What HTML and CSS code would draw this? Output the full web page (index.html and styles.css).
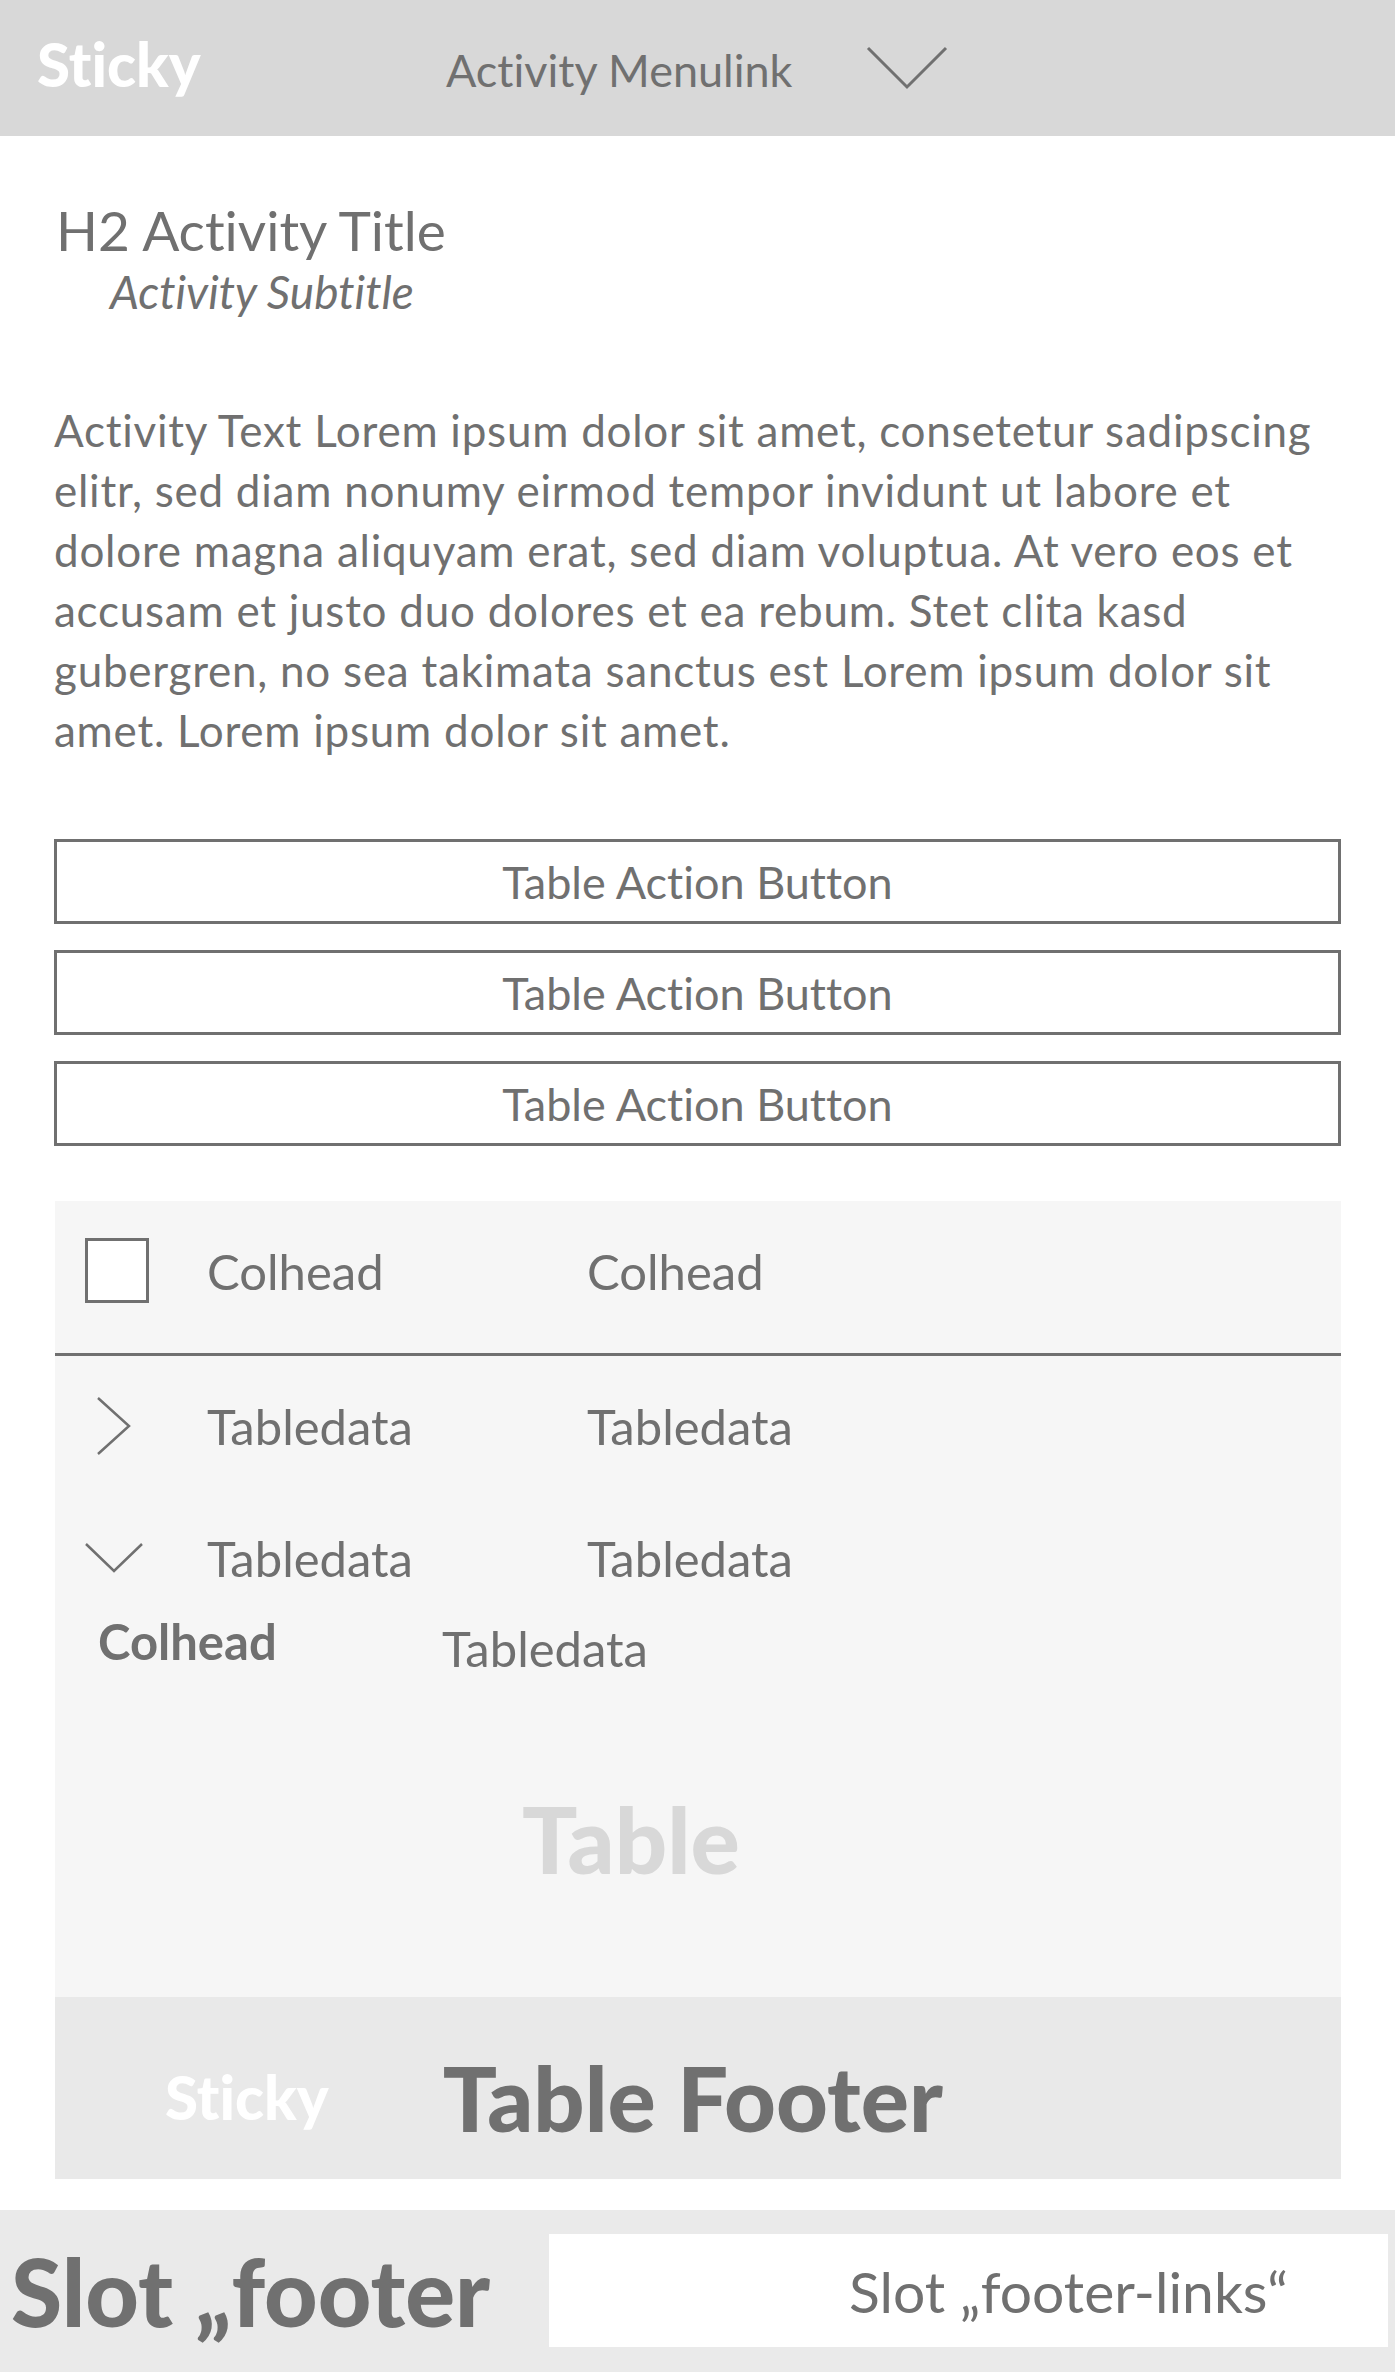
FILE: index.html
```html
<!DOCTYPE html>
<html lang="de">
<head>
<meta charset="utf-8">
<title>Activity</title>
<link rel="stylesheet" href="styles.css">
</head>
<body>
<header class="topbar">
  <span class="sticky-label">Sticky</span>
  <a class="menulink">Activity Menulink</a>
  <svg class="menu-chevron" width="82" height="44" viewBox="0 0 82 44"><polyline points="2,2 41,41 80,2" fill="none" stroke="#707070" stroke-width="3"/></svg>
</header>

<main class="content">
  <h2 class="title">H2 Activity Title</h2>
  <p class="subtitle">Activity Subtitle</p>

  <p class="activity-text">Activity Text Lorem ipsum dolor sit amet, consetetur sadipscing<br>elitr, sed diam nonumy eirmod tempor invidunt ut labore et<br>dolore magna aliquyam erat, sed diam voluptua. At vero eos et<br>accusam et justo duo dolores et ea rebum. Stet clita kasd<br>gubergren, no sea takimata sanctus est Lorem ipsum dolor sit<br>amet. Lorem ipsum dolor sit amet.</p>

  <div class="actions">
    <button class="action-btn">Table Action Button</button>
    <button class="action-btn">Table Action Button</button>
    <button class="action-btn">Table Action Button</button>
  </div>

  <section class="table">
    <div class="table-body">
      <div class="row head-row">
        <span class="checkbox"></span>
        <span class="cell">Colhead</span>
        <span class="cell">Colhead</span>
      </div>
      <div class="row data-row first">
        <svg class="chev-right" width="36" height="58" viewBox="0 0 36 58"><polyline points="2,1 33,29 2,57" fill="none" stroke="#707070" stroke-width="2.5"/></svg>
        <span class="cell">Tabledata</span>
        <span class="cell">Tabledata</span>
      </div>
      <div class="row data-row second">
        <svg class="chev-down" width="58" height="30" viewBox="0 0 58 30"><polyline points="1,1 29,28 57,1" fill="none" stroke="#707070" stroke-width="2.5"/></svg>
        <span class="cell">Tabledata</span>
        <span class="cell">Tabledata</span>
      </div>
      <div class="row detail-row">
        <span class="cell strong">Colhead</span>
        <span class="cell lower">Tabledata</span>
      </div>
      <div class="watermark">Table</div>
    </div>
    <div class="table-footer">
      <span class="sticky-label">Sticky</span>
      <span class="footer-title">Table Footer</span>
    </div>
  </section>
</main>

<footer class="page-footer">
  <span class="slot-footer">Slot „footer</span>
  <div class="slot-links">Slot „footer-links“</div>
</footer>
</body>
</html>
```

FILE: styles.css
```css
* { box-sizing: border-box; }

html, body {
  margin: 0;
  padding: 0;
}

body {
  font-family: "Lato", "Open Sans", sans-serif;
  font-variant-ligatures: none;
  color: #707070;
  background: #ffffff;
  width: 1395px;
}

.topbar {
  height: 136px;
  background: #d8d8d8;
  display: flex;
  align-items: center;
  padding-left: 37px;
}

.sticky-label {
  color: #ffffff;
  font-weight: 900;
  font-size: 60px;
  line-height: 1;
}

.topbar .sticky-label {
  width: 409px;
  margin-top: -8px;
}

.menulink {
  font-size: 45px;
  line-height: 1;
  color: #707070;
  margin-top: 4px;
}

.menu-chevron {
  margin-left: 74px;
}

.content {
  padding: 0 54px;
}

.title {
  margin: 61px 0 0 2px;
  font-size: 55px;
  font-weight: 400;
  line-height: 67px;
}

.subtitle {
  margin: 2px 0 0 56px;
  font-size: 46px;
  font-style: italic;
  line-height: 52px;
}

.activity-text {
  margin: 82px 0 0 0;
  font-size: 44px;
  letter-spacing: 0.75px;
  line-height: 60px;
  white-space: nowrap;
}

.actions {
  margin-top: 79px;
  display: flex;
  flex-direction: column;
  gap: 26px;
}

.action-btn {
  height: 85px;
  border: 3px solid #707070;
  background: #ffffff;
  font-family: inherit;
  font-variant-ligatures: none;
  font-size: 45px;
  color: #707070;
  padding: 0;
  margin: 0;
}

.table {
  margin-top: 55px;
  width: 1286px;
  margin-left: 1px;
}

.table-body {
  background: #f6f6f6;
  padding-bottom: 108px;
}

.row {
  display: grid;
  grid-template-columns: 122px 380px 1fr;
  align-items: center;
  padding-left: 30px;
  font-size: 49px;
  line-height: 60px;
}

.head-row {
  padding-top: 37px;
  padding-bottom: 50px;
  border-bottom: 3px solid #707070;
}

.checkbox {
  display: block;
  width: 64px;
  height: 65px;
  border: 3px solid #707070;
  background: #ffffff;
}

.data-row.first {
  margin-top: 40px;
}

.data-row.first .chev-right {
  margin-left: 11px;
  display: block;
}

.data-row.second {
  margin-top: 72px;
}

.chev-down {
  display: block;
}

.detail-row {
  grid-template-columns: 344px 1fr;
  padding-left: 43px;
  margin-top: 23px;
  align-items: start;
}

.cell.strong {
  font-weight: 700;
}

.cell.lower {
  margin-top: 7px;
}

.watermark {
  margin-top: 111px;
  height: 100px;
  line-height: 100px;
  font-size: 92px;
  font-weight: 900;
  color: #d8d8d8;
  text-align: center;
  padding-right: 134px;
}

.table-footer {
  height: 182px;
  background: #e9e9e9;
  display: flex;
  align-items: center;
  padding-left: 110px;
  padding-top: 18px;
  gap: 114px;
}

.footer-title {
  font-weight: 900;
  font-size: 90px;
  line-height: 1;
  color: #707070;
}

.page-footer {
  margin-top: 31px;
  height: 162px;
  background: #eaeaea;
  display: flex;
  align-items: center;
  padding-left: 11px;
  padding-right: 7px;
}

.slot-footer {
  font-weight: 900;
  font-size: 93px;
  line-height: 1;
}

.slot-links {
  margin-left: auto;
  align-self: flex-start;
  margin-top: 24px;
  width: 839px;
  height: 113px;
  background: #ffffff;
  display: flex;
  align-items: center;
  padding-left: 300px;
  font-size: 57px;
}
```
